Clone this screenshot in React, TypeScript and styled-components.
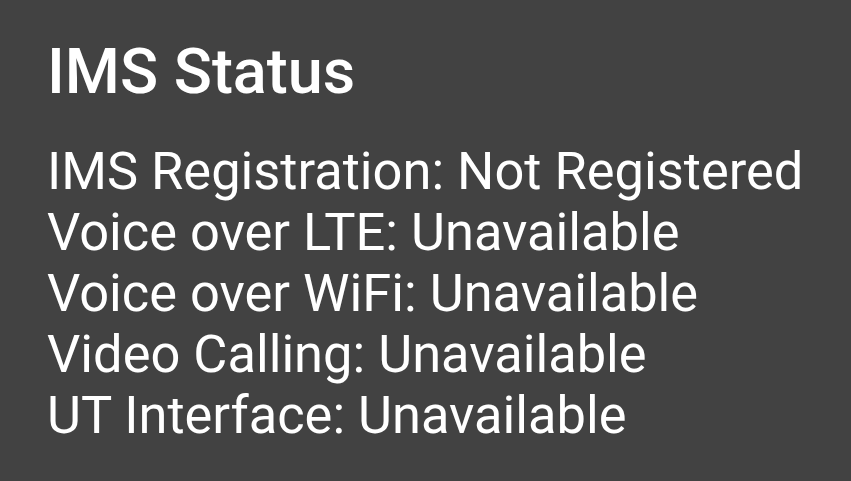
import styled, { createGlobalStyle } from 'styled-components';

const GlobalStyle = createGlobalStyle`
    html, body {
        margin: 0;
        padding: 0;
        background: #424242;
    }
    body {
        font-family: Roboto, "Noto Sans", sans-serif;
    }
`;

const rows = [
    { label: 'IMS Registration', value: 'Not Registered' },
    { label: 'Voice over LTE', value: 'Unavailable' },
    { label: 'Voice over WiFi', value: 'Unavailable' },
    { label: 'Video Calling', value: 'Unavailable' },
    { label: 'UT Interface', value: 'Unavailable' },
];

export default function App() {
    return (
        <>
            <GlobalStyle />
            <Dialog>
                <Title>IMS Status</Title>
                <StatusList>
                    {rows.map((row) => (
                        <StatusLine key={row.label}>
                            {row.label}: {row.value}
                        </StatusLine>
                    ))}
                </StatusList>
            </Dialog>
        </>
    );
}

const Dialog = styled.div`
    width: 851px;
    height: 481px;
    box-sizing: border-box;
    padding: 34px 47px 0;
    display: flex;
    flex-direction: column;
    gap: 31px;
    background: #424242;
    color: #ffffff;
`;

const Title = styled.h1`
    margin: 0;
    font-size: 63px;
    font-weight: 500;
    line-height: 76px;
`;

const StatusList = styled.div`
    display: flex;
    flex-direction: column;
`;

const StatusLine = styled.div`
    font-size: 52.4px;
    font-weight: 400;
    line-height: 61px;
    white-space: nowrap;
`;
